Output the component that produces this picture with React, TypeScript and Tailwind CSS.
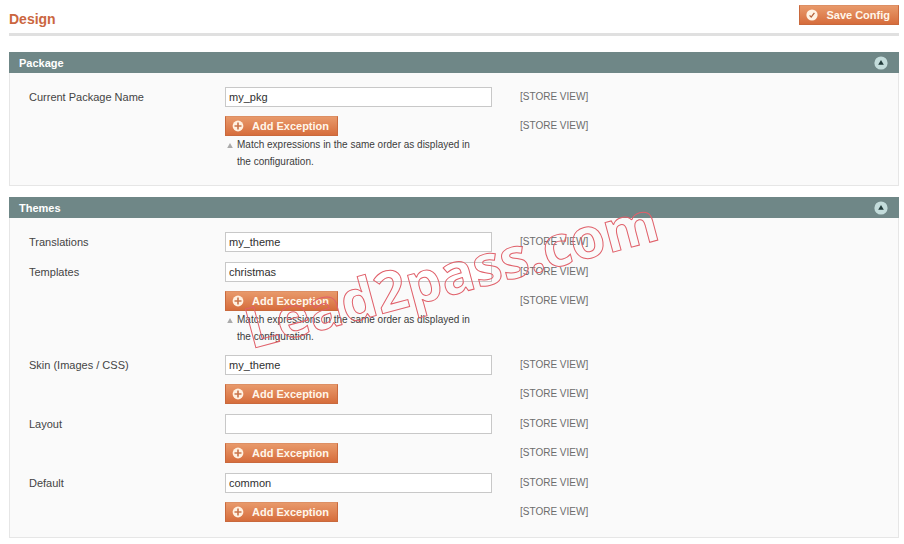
import type { ReactNode } from "react";

type Row = {
  id: string;
  label: string;
  value: string;
  exception?: boolean;
  hint?: boolean;
};

const packageRows: Row[] = [
  { id: "package-name", label: "Current Package Name", value: "my_pkg", exception: true, hint: true },
];

const themeRows: Row[] = [
  { id: "translations", label: "Translations", value: "my_theme" },
  { id: "templates", label: "Templates", value: "christmas", exception: true, hint: true },
  { id: "skin", label: "Skin (Images / CSS)", value: "my_theme", exception: true },
  { id: "layout", label: "Layout", value: "", exception: true },
  { id: "default", label: "Default", value: "common", exception: true },
];

function PlusIcon() {
  return (
    <svg viewBox="0 0 12 12" className="size-3 shrink-0" aria-hidden="true">
      <circle cx="6" cy="6" r="5.4" fill="#fff0e0" />
      <path d="M6 2.5v7M2.5 6h7" stroke="#c9744a" strokeWidth="1.6" />
    </svg>
  );
}

function CheckIcon() {
  return (
    <svg viewBox="0 0 12 12" className="size-3 shrink-0" aria-hidden="true">
      <circle cx="6" cy="6" r="5.6" fill="#fff3e4" />
      <path d="M3.6 6.4l1.6 1.7 3.2-4.3" fill="none" stroke="#b5623a" strokeWidth="1.3" />
    </svg>
  );
}

function CollapseIcon() {
  return (
    <svg viewBox="0 0 14 14" className="size-3.5" aria-hidden="true">
      <circle cx="7" cy="7" r="6.6" fill="#c3dcdb" />
      <path d="M7 4l2.8 4.8H4.2z" fill="#1f3838" />
    </svg>
  );
}

function OrangeButton({ icon, children }: { icon: ReactNode; children: ReactNode }) {
  return (
    <button
      type="button"
      className="flex h-5 items-center gap-2 whitespace-nowrap border border-[#c9693d] border-t-[#dd8f64] bg-gradient-to-b from-[#e8996a] to-[#d66d3c] pr-2 pl-1.5 text-[11px] leading-4 font-bold text-[#fff6ea]"
    >
      {icon}
      {children}
    </button>
  );
}

function Scope() {
  return <span className="text-[10px] leading-5 text-[#6c6c6c]">[STORE VIEW]</span>;
}

function Field({ row }: { row: Row }) {
  return (
    <div className="grid grid-cols-[196px_minmax(0,267px)_1fr] gap-y-[9px]">
      <label htmlFor={row.id} className="text-[11px] leading-5 text-[#444]">
        {row.label}
      </label>
      <input
        id={row.id}
        type="text"
        defaultValue={row.value}
        className="h-5 w-full border border-[#c8c8c8] bg-white px-[3px] text-[11px] leading-4 text-[#303030] outline-none"
      />
      <div className="flex pl-7">
        <Scope />
      </div>
      {row.exception && (
        <>
          <div className="col-start-2">
            <OrangeButton icon={<PlusIcon />}>Add Exception</OrangeButton>
            {row.hint && (
              <p className="flex gap-1 pr-2.5 pl-0.5 text-[10px] leading-[17px] text-[#3c3c3c]">
                <svg viewBox="0 0 6 17" className="h-[17px] w-1.5 shrink-0" aria-hidden="true">
                  <path d="M3 7l2.8 5H.2z" fill="#aaa" />
                </svg>
                Match expressions in the same order as displayed in the configuration.
              </p>
            )}
          </div>
          <div className="flex pl-7">
            <Scope />
          </div>
        </>
      )}
    </div>
  );
}

function Panel({ title, rows }: { title: string; rows: Row[] }) {
  return (
    <section>
      <div className="flex h-[21px] items-center justify-between bg-[#6f8787] pr-[11px] pl-2.5">
        <h2 className="text-[11px] leading-4 font-bold text-white">{title}</h2>
        <button type="button" aria-label={`Collapse ${title}`}>
          <CollapseIcon />
        </button>
      </div>
      <div className="flex flex-col gap-2.5 border border-t-0 border-[#e6e6e6] bg-[#fafafa] px-[19px] pt-3.5 pb-[15px]">
        {rows.map((row) => (
          <Field key={row.id} row={row} />
        ))}
      </div>
    </section>
  );
}

function Watermark() {
  return (
    <svg className="pointer-events-none absolute top-0 left-0 h-[400px] w-[700px]" aria-hidden="true">
      <text
        x="251"
        y="349"
        transform="rotate(-15 251 349)"
        className="fill-none stroke-[#e0606a] font-['Open_Sans',sans-serif] text-[56px] font-bold"
      >
        Lead2pass.com
      </text>
    </svg>
  );
}

export default function App() {
  return (
    <main className="relative bg-white px-[5px] pt-[5px] pb-1.5 pl-[9px] font-['Liberation_Sans',Arial,sans-serif]">
      <header className="mb-4 flex items-start justify-between border-b-[3px] border-[#e0e0e0] pb-1">
        <h1 className="pt-1 text-sm leading-5 font-bold text-[#cb6640]">Design</h1>
        <OrangeButton icon={<CheckIcon />}>Save Config</OrangeButton>
      </header>
      <div className="flex flex-col gap-[11px]">
        <Panel title="Package" rows={packageRows} />
        <Panel title="Themes" rows={themeRows} />
      </div>
      <Watermark />
    </main>
  );
}
